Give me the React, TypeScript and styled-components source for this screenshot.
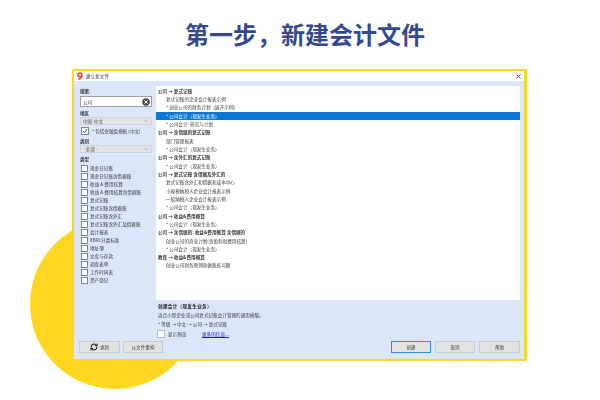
import React from "react";
import styled, { createGlobalStyle } from "styled-components";
import { RefreshCw, ChevronDown } from "lucide-react";

const Global = createGlobalStyle`
  html, body { margin: 0; padding: 0; background: #fff; }
  body { font-family: "Noto Sans CJK SC", "Noto Sans", sans-serif; }
`;
const Page = styled.div`
  position: relative; width: 600px; height: 400px; overflow: hidden; background: #fff;
  display: flex; flex-direction: column; align-items: flex-start;
`;
const Circle = styled.div`
  position: absolute; left: 30px; top: 219px; width: 170px; height: 170px;
  border-radius: 50%; background: #ffd722;
`;
const Heading = styled.h1`
  position: relative; margin: 0; width: 100%; height: 69px; padding: 18px 0 0 10px; box-sizing: border-box;
  text-align: center; font-size: 24px; line-height: 32px; font-weight: 700; color: #34498f; letter-spacing: 0;
`;
const Win = styled.div`
  position: relative; margin-left: 72px; width: 455px; height: 292px; box-sizing: border-box;
  border: 2px solid #ffd722; border-right-width: 3px; border-radius: 2px; background: #dbe6f9;
  display: flex; flex-direction: column; font-size: 4.6px; line-height: 8px; color: #3a3a3a;
  filter: blur(0.4px);
`;
const TitleBar = styled.div`
  height: 10px; background: #fff; display: flex; align-items: center; gap: 2px; padding: 0 3px 0 2px; color: #333;
`;
const TitleText = styled.span` flex: 1; `;
const Body = styled.div` flex: 1; display: flex; min-height: 0; `;
const Side = styled.div`
  width: 82px; box-sizing: border-box; padding: 7px 3px 6px 6px; display: flex; flex-direction: column;
`;
const Label = styled.div<{ $top?: number }>`
  font-weight: 700; height: 6px; line-height: 6px; margin-top: ${p => p.$top ?? 0}px;
`;
const SearchBox = styled.div`
  margin-top: 2px; height: 11px; background: #fff; border: 1px solid #9aa0ab; box-sizing: border-box; width: 72px; flex: none;
  display: flex; align-items: center; justify-content: space-between; padding: 0 1px 0 2px;
`;
const Select = styled.div`
  margin-top: 1px; height: 8px; width: 72px; flex: none; box-sizing: border-box; background: #e2e3e6; border: 1px solid #cfd3da;
  display: flex; align-items: center; justify-content: space-between; padding: 0 2px 0 2px; color: #555;
`;
const Hint = styled.div` display: flex; align-items: center; gap: 3px; margin: 2px 0 0 1px; height: 8px; white-space: nowrap; `;
const Box = styled.span<{ $large?: boolean; $soft?: boolean }>`
  flex: none; width: ${p => (p.$large ? 8 : 7)}px; height: ${p => (p.$large ? 8 : 7)}px; box-sizing: border-box;
  background: #fff; border: 1px solid ${p => (p.$soft ? "#b4b9c2" : "#84878d")}; display: inline-flex; align-items: center; justify-content: center;
`;
const TypeList = styled.div` margin-top: 2px; display: flex; flex-direction: column; `;
const TypeRow = styled.div` display: flex; align-items: center; gap: 2px; height: 8px; padding-left: 1px; white-space: nowrap; `;
const BtnRow = styled.div` margin: auto 0 0 -1px; display: flex; gap: 3px; `;
const Btn = styled.button<{ $primary?: boolean; $w?: number }>`
  flex: none; width: ${p => p.$w ?? 40}px; height: 12px; padding: 0; box-sizing: border-box; font: inherit; font-size: 4.6px; line-height: 8px; color: #444;
  background: #e2e2e2; border: 1px solid ${p => (p.$primary ? "#2f8fdc" : "#c8ccd3")};
  display: inline-flex; align-items: center; justify-content: center; gap: 2px;
`;
const Main = styled.div` flex: 1; display: flex; flex-direction: column; padding: 5px 4px 6px 0; min-width: 0; `;
const List = styled.div`
  height: 214px; flex: none; box-sizing: border-box; background: #fff; padding-top: 0.6px; display: flex; flex-direction: column;
`;
const Row = styled.div<{ $kind: string }>`
  height: 8.33px; line-height: 8.33px; white-space: nowrap;
  padding-left: ${p => (p.$kind === "h" ? 2 : 10)}px;
  font-weight: ${p => (p.$kind === "h" ? 700 : 400)};
  background: ${p => (p.$kind === "s" ? "#0a78d4" : "transparent")};
  color: ${p => (p.$kind === "s" ? "#fff" : "#3a3a3a")};
`;
const Info = styled.div` flex: 1; display: flex; flex-direction: column; padding: 2px 0 0 2px; position: relative; `;
const InfoTitle = styled.div` font-weight: 700; color: #222; height: 9px; line-height: 9px; letter-spacing: .3px; `;
const InfoText = styled.div` height: 9px; line-height: 9px; `;
const Preview = styled.div` display: flex; align-items: center; height: 9px; margin-left: -1px; `;
const PreviewLabel = styled.span` margin-left: 3px; width: 34px; `;
const MoreLink = styled.a` color: #1a1ae0; text-decoration: underline; `;
const Actions = styled.div` margin-top: auto; display: flex; justify-content: flex-end; gap: 4px; `;

const rows: [string, string][] = [
  ["h", "公司 → 复式记账"],
  ["i", "复式记账的企业会计报表示例"],
  ["b", "* 创业公司的财务计划（展开示例）"],
  ["s", "* 公司会计（现发生业务）"],
  ["b", "* 公司会计 -研究与计划"],
  ["h", "公司 → 含借据的复式记账"],
  ["i", "部门管理报表"],
  ["b", "* 公司会计（现发生业务）"],
  ["h", "公司 → 含外汇的复式记账"],
  ["b", "* 公司会计（现发生业务）"],
  ["h", "公司 → 复式记账 含借据及外汇的"],
  ["i", "复式记账含外汇和借据和成本中心"],
  ["i", "小规模纳税人企业会计报表示例"],
  ["i", "一般纳税人企业会计报表示例"],
  ["b", "* 公司会计（现发生业务）"],
  ["h", "公司 → 收益&费用概算"],
  ["b", "* 公司会计（现发生业务）"],
  ["h", "公司 → 含借据的: 收益&费用概算 含借据的"],
  ["i", "创业公司的商业计划(含盈利和费用核算)"],
  ["b", "* 公司会计（现发生业务）"],
  ["h", "教育 → 收益&费用概算"],
  ["i", "创业公司财务预测和做账练习题"],
];
const types = ["现金日记账", "现金日记账含借据账", "收益 & 费用核算", "收益 & 费用核算含借据账", "复式记账", "复式记账含借据账", "复式记账含外汇", "复式记账含外汇及借据账", "会计报表", "XBRL分类标准", "地址薄", "文库与存款", "调查表单", "工作时间表", "资产登记"];

export default function App() {
  return (
    <Page>
      <Global />
      <Circle />
      <Heading>第一步，新建会计文件</Heading>
      <Win>
        <TitleBar>
          <svg width="8" height="8" viewBox="0 0 8 8" aria-hidden="true">
            <circle cx="3.8" cy="3" r="2" fill="none" stroke="#e8402a" strokeWidth="1.4" />
            <path d="M5.8 3 C5.8 5.5 4.5 7 2.2 7.4" fill="none" stroke="#e8402a" strokeWidth="1.4" />
            <circle cx="3.8" cy="3" r=".8" fill="#f5b81f" />
          </svg>
          <TitleText>建立新文件</TitleText>
          <svg width="5" height="5" viewBox="0 0 5 5" aria-hidden="true">
            <path d="M.5 .5 4.5 4.5M4.5 .5 .5 4.5" stroke="#555" strokeWidth="1" />
          </svg>
        </TitleBar>
        <Body>
          <Side>
            <Label>搜索:</Label>
            <SearchBox>
              <span>公司</span>
              <svg width="8" height="8" viewBox="0 0 8 8" aria-hidden="true">
                <circle cx="4" cy="4" r="3.8" fill="#4a4a4a" />
                <path d="M2.4 2.4 5.6 5.6M5.6 2.4 2.4 5.6" stroke="#fff" strokeWidth="1" />
              </svg>
            </SearchBox>
            <Label $top={3}>地区</Label>
            <Select>
              <span>中国-中文</span>
              <ChevronDown size={6} strokeWidth={1.5} color="#777" />
            </Select>
            <Hint>
              <Box $large>
                <svg width="6" height="6" viewBox="0 0 6 6" aria-hidden="true">
                  <path d="M.8 3 2.4 4.6 5.3 1.2" fill="none" stroke="#333" strokeWidth=".9" />
                </svg>
              </Box>
              <span>* 包括金融类模板 (中文)</span>
            </Hint>
            <Label $top={3}>类别</Label>
            <Select>
              <span>- 全部 -</span>
              <ChevronDown size={6} strokeWidth={1.5} color="#777" />
            </Select>
            <Label $top={3}>类型</Label>
            <TypeList>
              {types.map(t => (
                <TypeRow key={t}>
                  <Box />
                  <span>{t}</span>
                </TypeRow>
              ))}
            </TypeList>
            <BtnRow>
              <Btn $w={41}>
                <RefreshCw size={8} strokeWidth={3} color="#111" />
                更新
              </Btn>
              <Btn $w={40}>从文件重构</Btn>
            </BtnRow>
          </Side>
          <Main>
            <List>
              {rows.map((r, i) => (
                <Row key={i} $kind={r[0]}>{r[1]}</Row>
              ))}
            </List>
            <Info>
              <InfoTitle>创建会计（现发生业务）</InfoTitle>
              <InfoText>适合小型企业或公司复式记账会计管理的通用模版。</InfoText>
              <InfoText>* 等级 → 中文 → 公司 → 复式记账</InfoText>
              <Preview>
                <Box $large $soft />
                <PreviewLabel>显示预览</PreviewLabel>
                <MoreLink href="#">更多的信息...</MoreLink>
              </Preview>
              <Actions>
                <Btn $primary>创建</Btn>
                <Btn>取消</Btn>
                <Btn $w={41}>帮助</Btn>
              </Actions>
            </Info>
          </Main>
        </Body>
      </Win>
    </Page>
  );
}
